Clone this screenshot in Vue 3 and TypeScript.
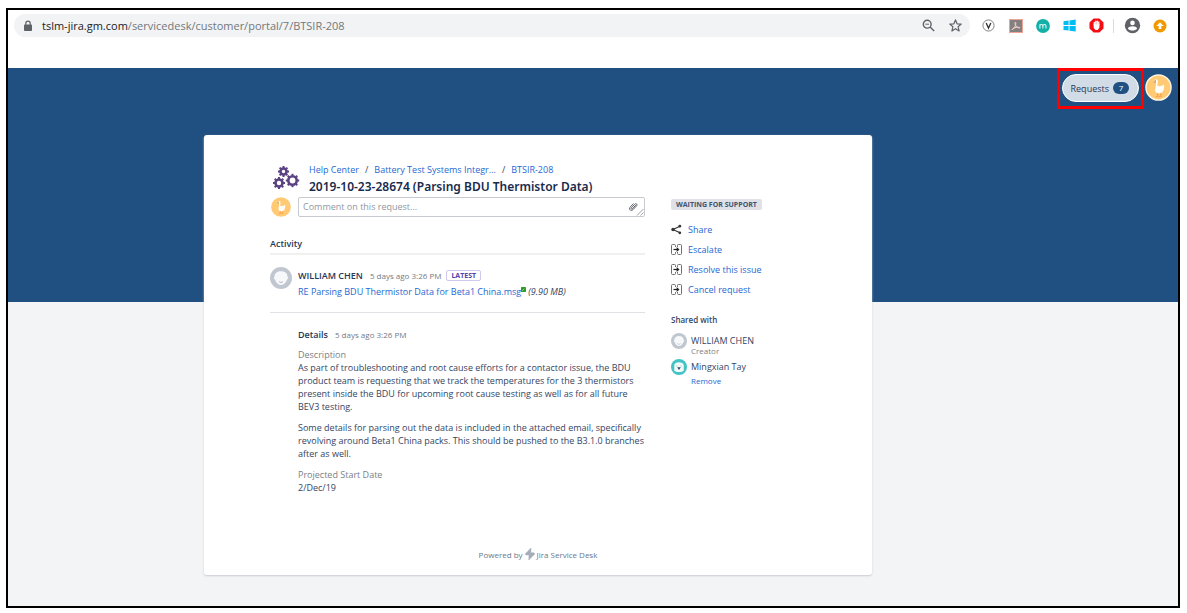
<script setup lang="ts">
import { ref } from 'vue'

interface Crumb { label: string }
interface Action { label: string; kind: 'share' | 'move' }

const crumbs: Crumb[] = [
  { label: 'Help Center' },
  { label: 'Battery Test Systems Integr...' },
  { label: 'BTSIR-208' },
]

const actions: Action[] = [
  { label: 'Share', kind: 'share' },
  { label: 'Escalate', kind: 'move' },
  { label: 'Resolve this issue', kind: 'move' },
  { label: 'Cancel request', kind: 'move' },
]

const requestCount = ref(7)
const comment = ref('')
const teeth = [0, 45, 90, 135, 180, 225, 270, 315]
const gears = [
  { x: 10.5, y: 5.5, r: 3 },
  { x: 6, y: 17, r: 3.5 },
  { x: 19.5, y: 14.5, r: 4.2 },
]
</script>

<template>
  <div class="frame">
    <header class="toolbar">
      <div class="address">
        <svg class="lock" viewBox="0 0 10 12" aria-hidden="true">
          <path d="M2.8 5V3.4a2.2 2.2 0 0 1 4.4 0V5" fill="none" stroke="#5f6368" stroke-width="1.2" />
          <rect x="1" y="4.6" width="8" height="6.4" rx="0.8" fill="#5f6368" />
        </svg>
        <span class="url"><span class="host">tslm-jira.gm.com</span>/servicedesk/customer/portal/7/BTSIR-208</span>
        <button class="tool" aria-label="Zoom out">
          <svg width="15" height="15" viewBox="0 0 15 15">
            <g fill="none" stroke="#5f6368" stroke-width="1.4">
              <circle cx="6.2" cy="6.2" r="3.9" />
              <path d="M9.1 9.1l4 4" />
              <path d="M4.4 6.2h3.6" stroke-width="1" />
            </g>
          </svg>
        </button>
        <button class="tool" aria-label="Bookmark this page">
          <svg width="15" height="15" viewBox="0 0 15 15">
            <path d="M7.5 1.9l1.6 3.9 4.1.3-3.1 2.7 1 4.1-3.6-2.2-3.6 2.2 1-4.1-3.1-2.7 4.1-.3z" fill="none" stroke="#5f6368" stroke-width="1.2" stroke-linejoin="round" />
          </svg>
        </button>
      </div>
      <div class="tools">
        <button class="tool" aria-label="V extension">
          <svg width="13" height="13" viewBox="0 0 14 14">
            <circle cx="7" cy="7" r="6" fill="#fff" stroke="#77797c" stroke-width="1" />
            <path d="M4.500 4.200L7 9.800l2.500-5.600" fill="none" stroke="#333" stroke-width="1.400" />
          </svg>
        </button>
        <button class="tool" aria-label="PDF extension">
          <svg width="14" height="14" viewBox="0 0 14 14">
            <rect x="0.500" y="0.500" width="13" height="13" fill="#858080" stroke="#f0a296" />
            <path d="M3 10.800c1-.3 2.900-2.600 3.400-4.300.5-1.600.6-3.300 0-3.300s-.5 1.700.2 3.100c.8 1.500 2.300 2.700 4.200 2.700.9-.8-3.800-1.500-7.300.9z" fill="none" stroke="#f7d4ce" stroke-width="1" />
          </svg>
        </button>
        <button class="tool" aria-label="M extension">
          <svg width="14" height="14" viewBox="0 0 14 14">
            <circle cx="7" cy="7" r="6.900" fill="#12b0a7" />
            <path d="M3.900 9.600V5.200M3.900 6.600c.3-1.500 3-1.700 3 .2v2.800M6.900 6.800c.3-1.700 3.100-1.800 3.100.2v2.600" fill="none" stroke="#e4f7f5" stroke-width="1.100" />
          </svg>
        </button>
        <button class="tool" aria-label="Windows accounts">
          <svg width="13" height="13" viewBox="0 0 13 13" fill="#00bcf2">
            <path d="M0.500 2.200L5.600 1.500V6.100H0.500zM6.500 1.400L12.700.5V6.100H6.500zM.5 7H5.600V11.600L.5 10.900zM6.500 7H12.700V12.600L6.500 11.700z" />
          </svg>
        </button>
        <button class="tool" aria-label="Ad blocker">
          <svg width="15" height="15" viewBox="0 0 15 15">
            <path d="M4.600.5h5.800l4.100 4.100v5.800l-4.100 4.100H4.600L.5 10.400V4.600z" fill="#f40d12" />
            <path d="M5.300 7V4.300M6.800 6.500V3.200M8.300 6.500V3.200M9.800 7V4" stroke="#fff" stroke-width="1.300" stroke-linecap="round" />
            <path d="M4.700 6.300h5.700v3.200L8.800 12H6.500L4.700 10z" fill="#fff" />
          </svg>
        </button>
        <span class="divider"></span>
        <button class="tool" aria-label="Profile">
          <svg width="17" height="17" viewBox="0 0 17 17">
            <circle cx="8.500" cy="8.500" r="7.700" fill="#5f6368" />
            <circle cx="8.500" cy="5.900" r="2.300" fill="#fff" />
            <path d="M3.900 11.600c.7-3 8.500-3 9.200 0-1.900 2.700-7.300 2.700-9.200 0z" fill="#fff" />
          </svg>
        </button>
        <button class="tool" aria-label="Update">
          <svg width="14" height="14" viewBox="0 0 14 14">
            <circle cx="7" cy="7" r="6.500" fill="#f29900" />
            <path d="M7 3.300L10.600 7H8.300v3H5.700V7H3.400z" fill="#fff" />
          </svg>
        </button>
      </div>
    </header>

    <div class="banner">
      <div class="highlight">
        <button class="requests">Requests <span class="count">{{ requestCount }}</span></button>
      </div>
      <button class="profile" aria-label="Account">
        <svg viewBox="0 0 28 28">
          <circle cx="14" cy="14" r="13" fill="#ffca73" stroke="#fff4df" stroke-width="1.500" />
          <path d="M9.800 6.300c1.200-1.500 3.700-.8 3.500 1.500l-.4 4.400c2 1 4.500.5 7-1.200.2 4-.5 9-5 9.200-4 .2-5.200-3-3.900-6.200l.6-4.800z" fill="#fffdf8" />
          <path d="M11.500 5.500L8.500 9l2.600-.2z" fill="#c9a070" />
          <path d="M13.200 20v3l-2 .5M16.500 20v3l-2 .6" fill="none" stroke="#ff9d4d" stroke-width="1.300" />
        </svg>
      </button>
    </div>

    <main class="card">
      <div class="columns">
        <section class="request">
          <div class="heading">
            <svg class="gears" viewBox="0 0 27 24" aria-hidden="true">
              <g v-for="g in gears" :key="g.x" stroke="#5b4282">
                <circle :cx="g.x" :cy="g.y" :r="g.r" fill="none" stroke-width="2.600" />
                <path
                  v-for="t in teeth"
                  :key="t"
                  :d="`M${g.x} ${g.y - g.r - 0.5}v-2`"
                  :transform="`rotate(${t} ${g.x} ${g.y})`"
                  stroke-width="2"
                />
              </g>
            </svg>
            <div>
              <nav class="crumbs" aria-label="Breadcrumbs">
                <template v-for="(c, i) in crumbs" :key="c.label">
                  <span v-if="i" class="slash">/</span>
                  <a href="#">{{ c.label }}</a>
                </template>
              </nav>
              <h1>2019-10-23-28674 (Parsing BDU Thermistor Data)</h1>
            </div>
          </div>

          <div class="comment">
            <svg class="avatar" viewBox="0 0 28 28" aria-hidden="true">
              <circle cx="14" cy="14" r="13.800" fill="#ffca73" />
              <path d="M9.800 6.300c1.200-1.500 3.700-.8 3.500 1.500l-.4 4.400c2 1 4.500.5 7-1.200.2 4-.5 9-5 9.200-4 .2-5.200-3-3.900-6.200l.6-4.800z" fill="#fffdf8" />
              <path d="M11.500 5.500L8.500 9l2.600-.2z" fill="#c9a070" />
              <path d="M13.200 20v3l-2 .5M16.500 20v3l-2 .6" fill="none" stroke="#ff9d4d" stroke-width="1.300" />
            </svg>
            <div class="field">
              <textarea v-model="comment" rows="1" placeholder="Comment on this request..." aria-label="Comment on this request"></textarea>
              <button class="attach" aria-label="Attach a file">
                <svg width="10" height="10" viewBox="0 0 10 10">
                  <path d="M7.800 3.100L4.300 6.900c-.7.700-1.700-.2-1-1l3.400-3.700c1.400-1.400 3.100.2 1.900 1.600L5 7.700C3.300 9.500.2 7.600 2 5.300l3.200-3.500" fill="none" stroke="#505560" stroke-width="0.900" stroke-linecap="round" />
                </svg>
              </button>
              <svg class="grip" viewBox="0 0 8 8" aria-hidden="true">
                <path d="M1 7.500L7.500 1M4.500 7.500l3-3" stroke="#8a8a8a" stroke-width="0.800" />
              </svg>
            </div>
          </div>

          <h2>Activity</h2>
          <article class="entry">
            <svg class="avatar" viewBox="0 0 22 22" aria-hidden="true">
              <circle cx="11" cy="11" r="11" fill="#c1c7d0" />
              <path d="M4.500 9.500c0-7 13-7 13 0l.8 1.700-1.200 1.300c-2.500 7.300-9.700 7.300-12.200 0l-1.200-1.300z" fill="#f7f8fa" />
              <path d="M9 14.500c1.200 1.300 2.800 1.300 4 0" fill="none" stroke="#b3bac5" />
            </svg>
            <div>
              <div class="byline">
                <strong>WILLIAM CHEN</strong>
                <time>5 days ago 3:26 PM</time>
                <span class="latest">LATEST</span>
              </div>
              <div class="file">
                <a href="#">RE Parsing BDU Thermistor Data for Beta1 China.msg</a>
                <svg width="5" height="5" viewBox="0 0 6 6" aria-hidden="true">
                  <rect width="6" height="6" rx="1" fill="#319b27" />
                  <path d="M1.500 4.500L4 2" fill="none" stroke="#b5e8ab" stroke-width="0.900" />
                </svg>
                <em>(9.90 MB)</em>
              </div>
            </div>
          </article>

          <div class="details">
            <div class="details-head"><strong>Details</strong><time>5 days ago 3:26 PM</time></div>
            <dl>
              <dt>Description</dt>
              <dd>
                <p>As part of troubleshooting and root cause efforts for a contactor issue, the BDU product team is requesting that we track the temperatures for the 3 thermistors present inside the BDU for upcoming root cause testing as well as for all future BEV3 testing.</p>
                <p>Some details for parsing out the data is included in the attached email, specifically revolving around Beta1 China packs. This should be pushed to the B3.1.0 branches after as well.</p>
              </dd>
              <dt>Projected Start Date</dt>
              <dd>2/Dec/19</dd>
            </dl>
          </div>
        </section>

        <aside>
          <span class="status">WAITING FOR SUPPORT</span>
          <ul class="actions">
            <li v-for="a in actions" :key="a.label">
              <svg v-if="a.kind === 'share'" width="11" height="11" viewBox="0 0 11 11" aria-hidden="true">
                <path d="M9 2.200L2 5.500l7 3.300" fill="none" stroke="#333" stroke-width="1.100" />
                <circle cx="8.800" cy="2.200" r="1.400" fill="#333" />
                <circle cx="2" cy="5.500" r="1.700" fill="#333" />
                <circle cx="8.800" cy="8.800" r="1.400" fill="#333" />
              </svg>
              <svg v-else width="11" height="11" viewBox="0 0 11 11" aria-hidden="true">
                <path d="M4.500 3V1.500q0-1-1-1h-2q-1 0-1 1v8q0 1 1 1h2q1 0 1-1V8M6.500 3V1.500q0-1 1-1h2q1 0 1 1v8q0 1-1 1h-2q-1 0-1-1V8" fill="none" stroke="#707070" />
                <path d="M2.500 5.500h4" stroke="#222" stroke-width="1.200" />
                <path d="M5.600 3.100L8.500 5.500 5.600 7.900z" fill="#222" />
              </svg>
              <a href="#">{{ a.label }}</a>
            </li>
          </ul>
          <h3>Shared with</h3>
          <div class="person">
            <svg viewBox="0 0 22 22" aria-hidden="true">
              <circle cx="11" cy="11" r="11" fill="#c1c7d0" />
              <path d="M4.500 9.500c0-7 13-7 13 0l.8 1.700-1.200 1.300c-2.500 7.300-9.700 7.300-12.200 0l-1.200-1.300z" fill="#f7f8fa" />
              <path d="M9 14.500c1.200 1.300 2.800 1.300 4 0" fill="none" stroke="#b3bac5" />
            </svg>
            <div><div class="name">WILLIAM CHEN</div><div class="role">Creator</div></div>
          </div>
          <div class="person">
            <svg viewBox="0 0 22 22" aria-hidden="true">
              <circle cx="11" cy="11" r="11" fill="#43c3c4" />
              <path d="M4.500 16V8.500c0-5.500 13-5.500 13 0V16c-2.500 2.500-10.500 2.500-13 0z" fill="#f4fbfb" />
              <path d="M8.500 11.500h5l-2.500 3.500z" fill="#344563" />
              <path d="M7 9.500h2M13 9.500h2" stroke="#8bb" />
            </svg>
            <div><div class="name">Mingxian Tay</div><a class="remove" href="#">Remove</a></div>
          </div>
        </aside>
      </div>

      <footer>
        <span>Powered by</span>
        <svg width="10" height="12" viewBox="0 0 10 12" aria-hidden="true">
          <path d="M6 0L.6 5.500Q0 6.800 1.200 7H4L3.800 12 9.500 6.200Q10 5 8.800 4.800H5.800z" fill="#a5adba" stroke="#a5adba" stroke-width="0.500" stroke-linejoin="round" />
        </svg>
        <a href="#">Jira Service Desk</a>
      </footer>
    </main>
  </div>
</template>

<style>
body {
  background: #fff;
}
</style>

<style scoped>
* {
  box-sizing: border-box;
}

.frame {
  display: flow-root;
  margin: 8px 7px 5px 6px;
  min-height: calc(100vh - 13px);
  border: 2px solid #000;
  background: #f3f4f6;
  color: #344563;
  font-family: "Open Sans", "Noto Sans", sans-serif;
  font-size: 9px;
  line-height: 13px;
}

button {
  border: 0;
  padding: 0;
  background: none;
  color: inherit;
  font: inherit;
}

svg {
  display: block;
  flex: none;
}

a {
  color: #2767d2;
  text-decoration: none;
}

h1,
h2,
h3,
p,
dl,
dd,
ul {
  margin: 0;
  padding: 0;
}

.toolbar {
  display: flex;
  align-items: flex-start;
  height: 58px;
  padding: 4px 5px 0 6px;
  background: #fff;
}

.address {
  display: flex;
  flex: 1;
  align-items: center;
  height: 23px;
  margin-right: 5px;
  padding: 0 1px 0 9px;
  border-radius: 12px;
  background: #f1f3f4;
}

.lock {
  width: 10px;
  height: 12px;
}

.url {
  flex: 1;
  margin-left: 9px;
  color: #74777b;
  font-size: 11px;
  line-height: 20px;
}

.host {
  color: #202124;
}

.tools {
  display: flex;
  align-items: center;
  height: 23px;
}

.tool {
  display: flex;
  align-items: center;
  justify-content: center;
  width: 27px;
  height: 23px;
}

.divider {
  width: 1px;
  height: 14px;
  margin: 0 5px 0 3px;
  background: #dadce0;
}

.banner {
  display: flex;
  align-items: flex-start;
  justify-content: flex-end;
  gap: 1px;
  height: 234px;
  padding-right: 6px;
  background: #205081;
}

.highlight {
  padding: 3px 2px 4px;
  border: 3px solid #f00;
}

.requests {
  display: flex;
  align-items: center;
  gap: 4px;
  height: 28px;
  padding: 0 9px 0 8px;
  border: 1px solid #fff;
  border-radius: 14px;
  background: #d2dce6;
  color: #253858;
}

.count {
  width: 16px;
  height: 12px;
  border-radius: 6px;
  background: #205081;
  color: #fff;
  font-size: 8px;
  line-height: 12px;
  text-align: center;
}

.profile {
  width: 27px;
  height: 27px;
  margin-top: 6px;
}

.card {
  width: 668px;
  max-width: 100%;
  margin: -167px 0 31px 196px;
  padding: 28px 66px 14px;
  border-radius: 3px;
  background: #fff;
  box-shadow: 0 1px 2px #c9ccd1;
}

.columns {
  display: grid;
  grid-template-columns: 375px 1fr;
  gap: 26px;
}

.heading {
  display: flex;
  gap: 9px;
  padding-left: 3px;
}

.gears {
  width: 27px;
  height: 24px;
  margin-top: 3px;
}

.crumbs {
  display: flex;
  line-height: 14px;
}

.slash {
  margin: 0 6px;
}

h1 {
  color: #172b4d;
  font-family: "Noto Sans", "Open Sans", sans-serif;
  font-size: 12px;
  font-weight: 600;
  line-height: 20px;
}

.comment {
  display: grid;
  grid-template-columns: 28px 1fr;
}

.avatar {
  width: 22px;
  height: 22px;
}

.comment .avatar {
  height: 20px;
}

.field {
  position: relative;
  height: 20px;
}

textarea {
  display: block;
  width: 100%;
  height: 20px;
  padding: 3px 28px 3px 4px;
  border: 1px solid #c7cad1;
  border-radius: 2px;
  outline: 0;
  color: #344563;
  font: inherit;
  line-height: 12px;
  resize: none;
  overflow: hidden;
}

textarea::placeholder {
  color: #8f97a3;
}

.attach {
  position: absolute;
  top: 5px;
  right: 7px;
}

.grip {
  position: absolute;
  right: 1px;
  bottom: 1px;
  width: 8px;
  height: 8px;
}

h2 {
  margin-top: 18px;
  border-bottom: 2px solid #f0f0f1;
  color: #253858;
  font-size: 9px;
  font-weight: 600;
  line-height: 18px;
}

.entry {
  display: grid;
  grid-template-columns: 28px 1fr;
  padding: 12px 0;
  border-bottom: 1px solid #dfe1e5;
}

.byline {
  display: flex;
  align-items: center;
  height: 17px;
}

strong {
  color: #253858;
  font-weight: 600;
}

time {
  margin-left: 7px;
  color: #747a84;
  font-size: 8px;
}

.latest {
  margin-left: 5px;
  padding: 0 4px;
  border: 1px solid #cfc8ef;
  border-radius: 2px;
  color: #5243aa;
  font-size: 7px;
  font-weight: 700;
  line-height: 9px;
}

.file {
  display: flex;
  height: 16px;
  line-height: 16px;
}

.file svg {
  margin: 3px 2px 0 0;
}

.details {
  padding: 13px 0 0 28px;
}

.details-head {
  display: flex;
  align-items: center;
  height: 16px;
  margin-bottom: 6px;
}

dt {
  color: #7a7f87;
}

p {
  margin-bottom: 8px;
}

aside {
  padding-top: 36px;
}

.status {
  display: block;
  width: max-content;
  padding: 0 5px;
  border-radius: 2px;
  background: #dfe1e6;
  color: #42526e;
  font-size: 7px;
  font-weight: 700;
  line-height: 11px;
}

.actions {
  margin-top: 9px;
  list-style: none;
}

.actions li {
  display: flex;
  align-items: center;
  gap: 6px;
  height: 20px;
}

h3 {
  margin: 14px 0 6px;
  font-size: 8px;
  font-weight: 600;
  line-height: 14px;
}

.person {
  display: flex;
  gap: 4px;
  margin-bottom: 4px;
}

.person svg {
  width: 16px;
  height: 16px;
}

.name {
  padding-top: 2px;
  line-height: 12px;
}

.role {
  color: #7a7f87;
  font-size: 8px;
  line-height: 8px;
}

.remove {
  display: block;
  margin-top: 4px;
  font-size: 8px;
  line-height: 8px;
}

footer {
  display: flex;
  align-items: center;
  justify-content: center;
  gap: 2px;
  height: 14px;
  margin-top: 53px;
  color: #6b778c;
  font-size: 8px;
}

footer a {
  color: inherit;
}
</style>
